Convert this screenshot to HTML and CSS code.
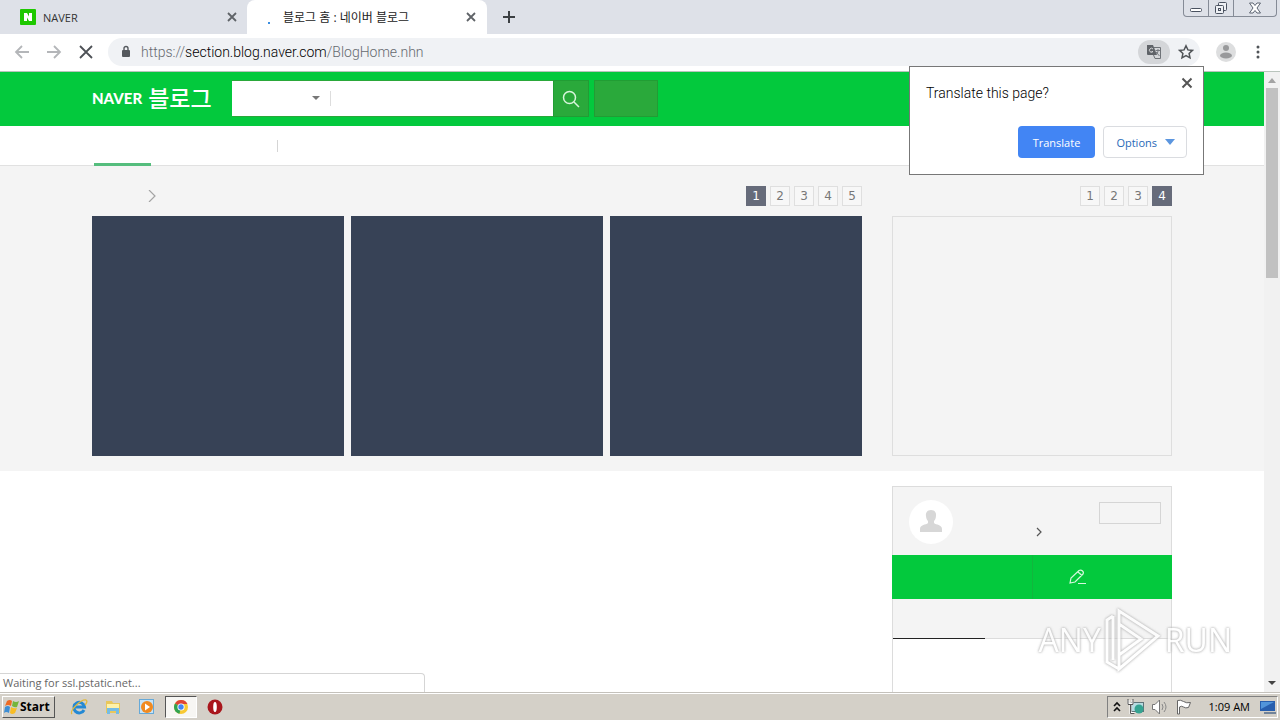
FILE: index.html
```html
<!DOCTYPE html>
<html lang="en">
<head>
<meta charset="utf-8">
<meta name="viewport" content="width=device-width, initial-scale=1">
<title>블로그 홈 : 네이버 블로그</title>
<link rel="stylesheet" href="styles.css">
</head>
<body>
<div class="desktop">
  <header class="tabstrip">
    <div class="tab">
      <svg class="icon" width="16" height="16" viewBox="0 0 16 16"><rect width="16" height="16" rx="1" fill="#1ec800"/><path d="M4 4h3l2 3.500V4h3v8H9L7 8.500V12H4z" fill="#fff"/></svg>
      <span class="tab-title">NAVER</span>
      <button class="plain" aria-label="Close NAVER tab"><svg width="10" height="10" viewBox="0 0 10 10"><path d="M1 1l8 8M9 1l-8 8" stroke="#5f6368" stroke-width="1.800"/></svg></button>
    </div>
    <div class="tab tab-active">
      <svg class="icon" width="16" height="16" viewBox="0 0 16 16"><rect x="8" y="13" width="2" height="2" fill="#3b8ee0"/></svg>
      <span class="tab-title">블로그 홈 : 네이버 블로그</span>
      <button class="plain" aria-label="Close blog tab"><svg width="10" height="10" viewBox="0 0 10 10"><path d="M1 1l8 8M9 1l-8 8" stroke="#5f6368" stroke-width="1.800"/></svg></button>
    </div>
    <button class="plain new-tab" aria-label="New tab"><svg width="12" height="12" viewBox="0 0 12 12"><path d="M6 0v12M0 6h12" stroke="#3c4043" stroke-width="2"/></svg></button>
    <div class="window-controls">
      <button aria-label="Minimize"><svg width="12" height="6" viewBox="0 0 12 6"><rect x=".5" y="1.500" width="11" height="3" rx="1" fill="#fff" stroke="#4a5260"/></svg></button>
      <button aria-label="Restore"><svg width="14" height="14" viewBox="0 0 14 14" fill="#eef0f4" stroke="#4a5260"><rect x="4.500" y="1.500" width="8" height="8" rx="1"/><rect x="1.500" y="4.500" width="8" height="8" rx="1"/><rect x="4.500" y="7.500" width="2" height="2"/></svg></button>
      <button class="wide" aria-label="Close window"><svg width="14" height="12" viewBox="0 0 14 12"><path d="M1.500 1h3.500l2 2.500L9 1h3.500L9 6l3.500 5H9L7 8.500 5 11H1.500L5 6z" fill="#fff" stroke="#5d6572"/></svg></button>
    </div>
  </header>

  <div class="toolbar">
    <button class="plain" aria-label="Back"><svg width="16" height="16" viewBox="0 0 16 16" fill="none" stroke="#b4b6b9" stroke-width="1.800"><path d="M15 8H2M8 2L2 8l6 6"/></svg></button>
    <button class="plain" aria-label="Forward"><svg width="16" height="16" viewBox="0 0 16 16" fill="none" stroke="#b4b6b9" stroke-width="1.800"><path d="M1 8h13M8 2l6 6-6 6"/></svg></button>
    <button class="plain" aria-label="Stop"><svg width="16" height="16" viewBox="0 0 16 16" fill="none" stroke="#4d5156" stroke-width="1.800"><path d="M2 2l12 12M14 2L2 14"/></svg></button>
    <div class="omnibox">
      <svg width="10" height="14" viewBox="0 0 10 14"><rect x="1" y="5" width="8" height="7" rx="1" fill="#55595e"/><path d="M3 5V3.500a2 2 0 0 1 4 0V5" fill="none" stroke="#55595e" stroke-width="1.400"/></svg>
      <span class="url">https://<b>section.blog.naver.com</b>/BlogHome.nhn</span>
      <button class="plain translate-badge" aria-label="Translate"><svg width="16" height="16" viewBox="0 0 16 16"><path d="M1 1h6l4 10H2a1 1 0 0 1-1-1z" fill="#5f6368"/><path d="M8 3.500h6.500v11H9L7.500 11" fill="none" stroke="#6f7378"/><path d="M9.500 6.500H14M12 5v1.500c0 2-1 3.500-2 4M10 8l3.500 4" fill="none" stroke="#777b80"/><path d="M7 5a2 2 0 1 0 0 2.500H5.500" fill="none" stroke="#d4d5d7"/></svg></button>
      <button class="plain" aria-label="Bookmark"><svg width="16" height="16" viewBox="0 0 16 16"><path d="M8 1.800l1.900 4.100 4.500.5-3.300 3 .9 4.400L8 11.600l-4 2.200.9-4.400-3.300-3 4.500-.5z" fill="none" stroke="#505458" stroke-width="1.500"/></svg></button>
    </div>
    <button class="plain" aria-label="Profile"><svg width="20" height="20" viewBox="0 0 20 20"><circle cx="10" cy="10" r="10" fill="#dddedf"/><circle cx="10" cy="6" r="3" fill="#98999b"/><ellipse cx="10" cy="13.500" rx="6" ry="3" fill="#98999b"/></svg></button>
    <button class="plain menu-button" aria-label="Menu"><svg width="4" height="14" viewBox="0 0 4 14" fill="#505458"><circle cx="2" cy="2" r="1.500"/><circle cx="2" cy="7" r="1.500"/><circle cx="2" cy="12" r="1.500"/></svg></button>
  </div>

  <div class="viewport">
    <main class="page">
      <div class="masthead">
        <div class="wrap masthead-row">
          <a class="brand" href="#"><span class="brand-naver">NAVER</span><span class="brand-blog">블로그</span></a>
          <form class="search">
            <button type="button" class="plain scope" aria-label="Search scope"><svg width="8" height="4" viewBox="0 0 8 4"><path d="M0 0h8L4 4z" fill="#777"/></svg></button>
            <input type="text" aria-label="Search">
            <button type="button" class="search-button" aria-label="Search"><svg width="18" height="18" viewBox="0 0 18 18" fill="none" stroke="#d8f5dc" stroke-width="1.500"><circle cx="7.500" cy="7.500" r="6"/><path d="M12 12l5 5"/></svg></button>
          </form>
          <button class="blog-search" aria-label="Blog search"></button>
        </div>
      </div>
      <nav class="subnav"><div class="wrap subnav-row"><a class="current" href="#" aria-label="Blog home"></a><i class="divider"></i></div></nav>

      <section class="featured">
        <div class="wrap columns">
          <div class="main-column">
            <div class="section-head">
              <svg class="more" width="8" height="12" viewBox="0 0 8 12"><path d="M1 0l6 6-6 6" fill="none" stroke="#a4a4a4" stroke-width="1.200"/></svg>
              <div class="pager"><button class="on">1</button><button>2</button><button>3</button><button>4</button><button>5</button></div>
            </div>
            <div class="cards"><div class="card"></div><div class="card"></div><div class="card"></div></div>
          </div>
          <div class="side-column">
            <div class="section-head"><div class="pager"><button>1</button><button>2</button><button>3</button><button class="on">4</button></div></div>
            <div class="promo"></div>
          </div>
        </div>
      </section>

      <section class="wrap lower">
        <aside class="profile">
          <div class="profile-top">
            <svg width="44" height="44" viewBox="0 0 44 44"><circle cx="22" cy="22" r="22" fill="#fff"/><path d="M22 10c4 0 5.500 3 5 6-.3 3-1 4-2 5v2c2 2 8 1.500 8 6v3H11v-3c0-4.500 6-4 8-6v-2c-1-1-1.700-2-2-5-.5-3 1-6 5-6z" fill="#d7d7d7"/></svg>
            <svg class="profile-more" width="6" height="10" viewBox="0 0 6 10"><path d="M1 1l4 4-4 4" fill="none" stroke="#555" stroke-width="1.200"/></svg>
            <button class="logout" aria-label="Log out"></button>
          </div>
          <div class="actions">
            <button aria-label="My blog"></button>
            <button aria-label="Write"><svg width="18" height="16" viewBox="0 0 18 16" fill="none" stroke="#d5f7dd" stroke-width="1.200"><path d="M1 14l1-5L10 1.500q2-1 3.500.5 1.500 1.500.5 3L6 13zM9 3l4 3.500M9 14.500h8"/></svg></button>
          </div>
          <div class="profile-tabs"><i></i></div>
          <div class="profile-body"></div>
        </aside>
      </section>
      <div class="status">Waiting for ssl.pstatic.net...</div>
    </main>
    <div class="scrollbar">
      <svg width="16" height="16" viewBox="0 0 16 16"><path d="M4 11h8L8 6z" fill="#a3a3a3"/></svg>
      <div class="thumb"></div>
      <svg class="down" width="16" height="16" viewBox="0 0 16 16"><path d="M4 5h8l-4 4z" fill="#444"/></svg>
    </div>
  </div>

  <footer class="taskbar">
    <button class="start"><svg width="16" height="16" viewBox="0 0 16 16"><path d="M3 2q3-2 5 0L7 7Q4 5 1 7z" fill="#ee6b24"/><path d="M9 2q3 2 6 0l-2 6q-2 1-5-1z" fill="#75b53c"/><path d="M1 8q3-2 5 0l-1 6q-3-2-5 0z" fill="#3e8ed4"/><path d="M7 8q3 2 6 1l-2 5q-3 2-5 0z" fill="#f8bd25"/></svg>Start</button>
    <div class="launchers">
      <button class="launcher" aria-label="Internet Explorer"><svg width="18" height="18" viewBox="0 0 18 18" fill="none"><path d="M14 12a5.300 5.300 0 1 1 .5-3H5" stroke="#2489d4" stroke-width="3"/><path d="M2 16C-1 13 11 1 16 2c2 1 0 4-1 5" stroke="#e2b93b" stroke-width="1.300"/></svg></button>
      <button class="launcher" aria-label="Explorer"><svg width="18" height="18" viewBox="0 0 18 18"><path d="M2 3h6l1 2h7v10H2z" fill="#e9c75b"/><path d="M3 6h12v4H3z" fill="#fff2a8"/><path d="M3 16v-6h12v6h-3v-3H6v3z" fill="#75bce5"/></svg></button>
      <button class="launcher" aria-label="Media Player"><svg width="18" height="18" viewBox="0 0 18 18"><rect x="1.500" y="1.500" width="14" height="14" fill="#c7e3f6" stroke="#66a9d8"/><circle cx="9" cy="9" r="6" fill="#f18a20"/><path d="M7 5.500l5 3.500-5 3.500z" fill="#fff"/></svg></button>
      <button class="launcher pressed" aria-label="Chrome"><svg width="16" height="16" viewBox="0 0 16 16"><circle cx="8" cy="8" r="7" fill="#f8c933"/><path d="M8 8L2 4.400A7 7 0 0 1 14.400 5H8z" fill="#df4435"/><path d="M8 8l-1.500 6.800A7 7 0 0 1 2 4.400z" fill="#31a350"/><circle cx="8" cy="8" r="3.600" fill="#fff"/><circle cx="8" cy="8" r="2.700" fill="#4285f4"/></svg></button>
      <button class="launcher" aria-label="Opera"><svg width="18" height="18" viewBox="0 0 18 18"><circle cx="9" cy="9" r="7.500" fill="#a9161c"/><ellipse cx="9" cy="9" rx="1.800" ry="5" fill="#fff"/></svg></button>
    </div>
    <div class="tray">
      <svg width="8" height="12" viewBox="0 0 8 12"><path d="M1 5l3-3 3 3M1 10l3-3 3 3" fill="none" stroke="#111" stroke-width="1.600"/></svg>
      <svg width="18" height="16" viewBox="0 0 18 16"><rect x="4.500" y="3.500" width="12" height="9" fill="#b7dce2" stroke="#5f7378"/><circle cx="12" cy="10" r="4.500" fill="#35a391"/><path d="M1.500 1v4h4V1M3.500 5v9h4" fill="none" stroke="#fff" stroke-width="2"/><path d="M1 0v5.500h5V0M3.500 5v9.500h4" fill="none" stroke="#555"/></svg>
      <svg width="18" height="16" viewBox="0 0 18 16"><path d="M1.500 5.500H4L8.500 1v14L4 10.500H1.500z" fill="#fff" stroke="#777"/><path d="M11 5q2 3 0 6M13 3q4 5 0 10" fill="none" stroke="#888"/></svg>
      <svg width="18" height="16" viewBox="0 0 18 16"><path d="M2.500 15V1.500q3-1 6 1t7 1l-2 5q-3 1-5-.5t-4 0V15z" fill="#fff" stroke="#666"/></svg>
      <time>1:09 AM</time>
      <svg width="18" height="16" viewBox="0 0 18 16"><path d="M1 2h15v10H1z" fill="#285fae"/><path d="M2 3h13L2 10z" fill="#5295da"/><path d="M5 13h12v2H5z" fill="#718399"/></svg>
    </div>
  </footer>

  <div class="translate-popup" role="dialog" aria-label="Translate this page?">
    <div class="popup-head"><span>Translate this page?</span><button class="plain" aria-label="Close"><svg width="12" height="12" viewBox="0 0 12 12"><path d="M1.500 1.500l9 9M10.500 1.500l-9 9" stroke="#555" stroke-width="2"/></svg></button></div>
    <div class="popup-actions"><button class="primary">Translate</button><button class="secondary">Options<svg width="10" height="6" viewBox="0 0 10 6"><path d="M0 0h10L5 6z" fill="#5c96df"/></svg></button></div>
  </div>

  <div class="watermark">
    <span>ANY</span>
    <svg width="56" height="64" viewBox="0 0 56 64" fill="none" stroke="#fff" stroke-width="3"><path d="M14 3L53 28 14 61V47l22-16L14 16zM14 16v31M8 8L2 12v42l12 7M8 8v44"/></svg>
    <span>RUN</span>
  </div>
</div>
</body>
</html>
```
FILE: styles.css
```css
* { box-sizing: border-box; }
body { margin: 0; font-family: "Open Sans", "Noto Sans CJK KR", sans-serif; font-size: 11px; color: #333; }
button, input { font: inherit; margin: 0; padding: 0; border: 0; border-radius: 0; }
a { text-decoration: none; }
svg { display: block; flex: none; }
.desktop { position: relative; display: flex; flex-direction: column; height: 100vh; overflow: hidden; background: #fff; }
.plain { background: none; display: flex; align-items: center; justify-content: center; }

/* browser frame */
.tabstrip { display: flex; flex: none; height: 34px; background: #dee1e8; }
.tab { display: flex; align-items: center; width: 240px; padding: 0 11px 0 13px; }
.tab:first-child { width: 247px; padding: 0 10px 0 20px; }
.tab-active { background: #fff; border-radius: 8px 8px 0 0; }
.tab-title { flex: 1; margin-left: 7px; font-size: 12px; color: #222; white-space: nowrap; }
.tab:first-child .tab-title { font-size: 11px; color: #333; }
.new-tab { width: 44px; }
.window-controls { display: flex; height: 17px; margin: 0 3px 0 auto; border: 1px solid #858b96; border-top: 0; border-radius: 0 0 4px 4px; }
.window-controls button { display: flex; align-items: center; justify-content: center; width: 25px; background: none; border-right: 1px solid #858b96; }
.window-controls button:first-child { padding-top: 4px; }
.window-controls .wide { width: 42px; border: 0; }
.toolbar { display: flex; flex: none; align-items: center; gap: 16px; height: 38px; padding: 0 16px 1px 14px; border-bottom: 1px solid #b9c4bc; }
.omnibox { display: flex; flex: 1; align-items: center; height: 28px; margin-left: -2px; padding: 0 6px 0 13px; border-radius: 14px; background: #f0f2f5; }
.url { flex: 1; margin-left: 10px; font: 300 14px/20px Roboto, sans-serif; color: #666a70; white-space: nowrap; }
.url b { font-weight: 300; color: #000; }
.translate-badge { width: 32px; height: 24px; margin-right: 8px; border-radius: 12px; background: #d4d6d9; }
.menu-button { width: 12px; }

/* page */
.viewport { display: flex; flex: 1; min-height: 0; }
.page { position: relative; flex: 1; overflow: hidden; background: #fff; }
.wrap { width: 100%; max-width: 1080px; margin: 0 auto; }
.masthead { background: #03c93d; }
.masthead-row { display: flex; align-items: center; height: 54px; padding-bottom: 2px; }
.brand { display: flex; align-items: center; gap: 6px; width: 140px; color: #fff; white-space: nowrap; }
.brand-naver { font: 900 15px/20px Lato, sans-serif; }
.brand-blog { font: 500 23px/24px "Noto Sans CJK KR", sans-serif; padding-bottom: 2px; }
.search { display: flex; width: 357px; height: 37px; }
.scope { width: 99px; padding: 0 11px 0 0; justify-content: flex-end; background: linear-gradient(#ddd, #ddd) right 0 center / 1px 15px no-repeat #fff; border: solid #2aa83a; border-width: 1px 0; }
.search input { flex: 1; min-width: 0; background: #fff; border: solid #2aa83a; border-width: 1px 0; }
.search-button { display: flex; align-items: center; justify-content: center; width: 36px; padding-top: 2px; background: #2aa93b; border: 1px solid #219d34; }
.blog-search { width: 64px; height: 37px; margin-left: 5px; background: #2aa93b; border: 1px solid #219d34; }
.subnav { height: 40px; border-bottom: 1px solid #e1e1e1; }
.subnav-row { display: flex; align-items: center; height: 40px; padding-left: 2px; }
.current { align-self: stretch; width: 57px; border-bottom: 3px solid #55bd7d; }
.divider { width: 1px; height: 12px; margin-left: 126px; background: #d5d5d5; }
.featured { background: #f4f4f4; padding: 20px 0 15px; }
.columns { display: flex; gap: 30px; }
.main-column { flex: 1; }
.side-column { width: 280px; }
.section-head { display: flex; align-items: center; height: 20px; margin-bottom: 10px; }
.more { margin-left: 56px; }
.pager { display: flex; gap: 4px; margin-left: auto; }
.pager button { width: 20px; height: 20px; background: #f7f7f7; border: 1px solid #dfdfdf; color: #777; font: 12px/18px "DejaVu Sans", sans-serif; }
.pager .on { background: #666b7a; border-color: #666b7a; color: #fff; }
.cards { display: grid; grid-template-columns: repeat(3, 1fr); gap: 7px; }
.card { height: 240px; background: #374256; }
.promo { height: 240px; border: 1px solid #dedede; }
.lower { display: flex; justify-content: flex-end; padding-top: 15px; }
.profile { width: 280px; }
.profile-top { display: flex; align-items: flex-start; height: 69px; padding: 13px 10px 0 16px; background: #f4f4f4; border: 1px solid #dcdcdc; border-bottom: 0; }
.profile-more { margin: 27px 0 0 83px; }
.logout { width: 62px; height: 22px; margin: 2px 0 0 auto; background: none; border: 1px solid #d5d5d5; }
.actions { display: grid; grid-template-columns: 141px 1fr; height: 44px; }
.actions button { display: flex; align-items: center; padding-left: 36px; background: #03c93d; }
.actions button:first-child { border-right: 1px solid #12b63e; }
.profile-tabs { display: flex; height: 40px; background: #f4f4f4; border: 1px solid #dcdcdc; border-top: 0; }
.profile-tabs i { width: 92px; height: 40px; border-bottom: 1px solid #222; }
.profile-body { height: 80px; border: solid #dcdcdc; border-width: 0 1px; }
.status { position: absolute; left: 0; bottom: 0; width: 425px; height: 19px; padding-left: 3px; border: solid #d5d5d5; border-width: 1px 1px 0 0; border-radius: 0 4px 0 0; background: #fff; color: #666; line-height: 18px; }
.scrollbar { display: flex; flex-direction: column; width: 16px; background: #f1f1f1; }
.thumb { height: 190px; margin: 0 2px; background: #c1c1c1; }
.down { margin-top: auto; }

/* taskbar */
.taskbar { display: flex; flex: none; align-items: center; height: 28px; padding: 0 2px; background: #d4d0c8; border-top: 1px solid #c4c1bb; box-shadow: inset 0 1px #fff; }
.start { display: flex; align-items: center; gap: 0; width: 53px; height: 22px; padding-left: 1px; border: 1px solid; border-color: #fff #555 #555 #fff; background: #d4d0c8; color: #000; font-weight: 700; font-size: 12px; }
.launchers { display: flex; gap: 2px; margin-left: 8px; }
.launcher { display: flex; align-items: center; justify-content: center; width: 32px; height: 22px; background: none; }
.pressed { background: #f7f6f3; border: 1px solid; border-color: #555 #fff #fff #555; }
.tray { display: flex; align-items: center; gap: 6px; height: 22px; margin-left: auto; padding: 0 0 0 5px; border: 1px solid; border-color: #808080 #fff #fff #808080; color: #000; }
.tray time { margin: 0 3px 0 10px; white-space: nowrap; }

/* overlays */
.translate-popup { position: absolute; top: 66px; right: 76px; width: 295px; height: 109px; padding: 10px 10px 16px 16px; border: 1px solid #777; background: #fff; }
.popup-head { display: flex; justify-content: space-between; align-items: flex-start; color: #000; font: 300 14px/32px Roboto, sans-serif; }
.popup-head .plain { width: 12px; height: 12px; }
.popup-actions { display: flex; justify-content: flex-end; gap: 8px; margin: 17px 6px 0 0; }
.popup-actions button { height: 32px; border-radius: 4px; }
.primary { width: 77px; background: #4285f4; color: #fff; }
.secondary { display: flex; align-items: center; justify-content: flex-end; gap: 8px; width: 84px; padding-right: 11px; background: #fff; border: 1px solid #dadce0; color: #2868b8; }
.watermark { position: absolute; right: 48px; bottom: 48px; display: flex; align-items: center; gap: 4px; color: #fff; font: 32px/64px "Open Sans", sans-serif; filter: drop-shadow(0 0 1px #aaa) drop-shadow(0 0 1px #ccc); pointer-events: none; opacity: 0.8; }
```
